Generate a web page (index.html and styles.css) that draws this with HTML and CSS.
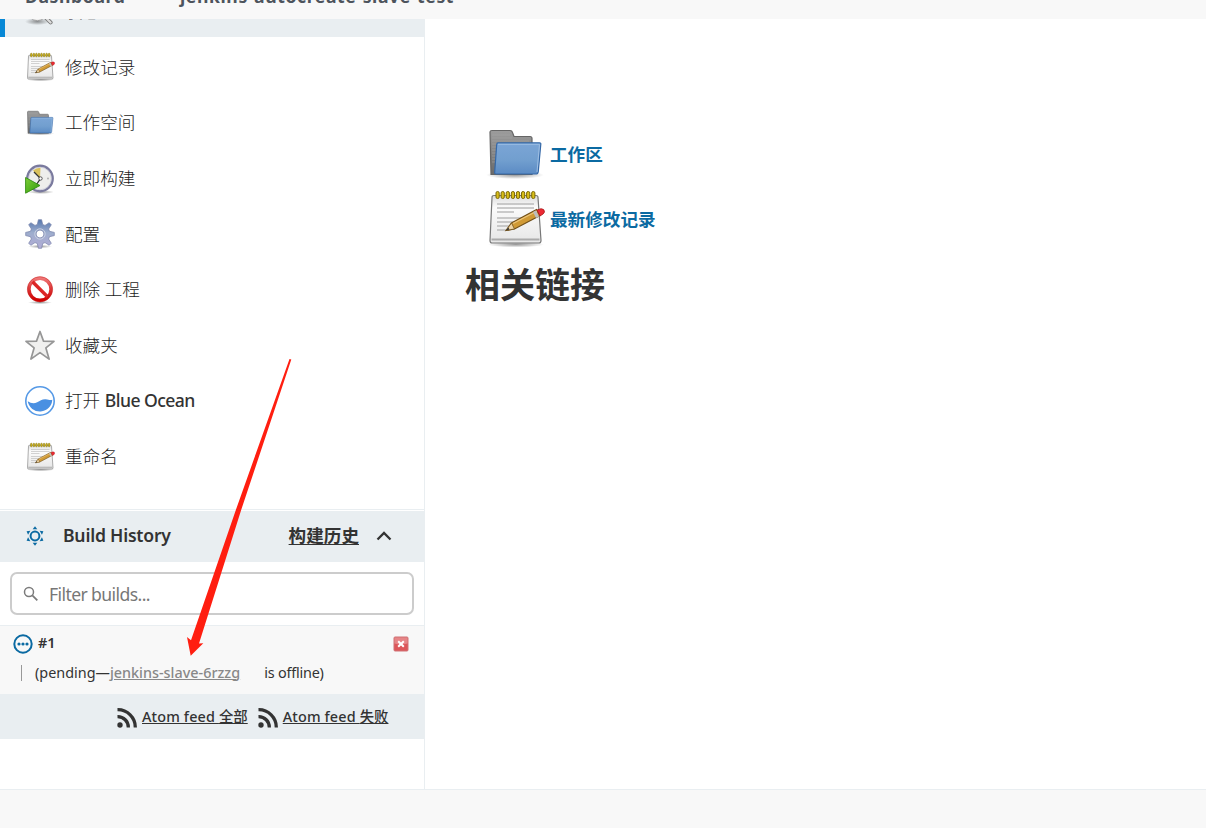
FILE: index.html
```html
<!DOCTYPE html>
<html lang="zh-CN">
<head>
<meta charset="utf-8">
<title>jenkins-autocreate-slave-test [Jenkins]</title>
<link rel="stylesheet" href="styles.css">
</head>
<body>
<svg width="0" height="0" class="defs" aria-hidden="true">
  <defs>
    <linearGradient id="gBlue" x1="0" y1="0" x2="0" y2="1"><stop offset="0" stop-color="#7ba5d6"/><stop offset=".55" stop-color="#729fcf"/><stop offset="1" stop-color="#5b8bc4"/></linearGradient>
    <linearGradient id="gGray" x1="0" y1="0" x2="0" y2="1"><stop offset="0" stop-color="#9c9c9c"/><stop offset="1" stop-color="#6a6a6a"/></linearGradient>
    <linearGradient id="gPaper" x1="0" y1="0" x2="0" y2="1"><stop offset="0" stop-color="#dcdcdc"/><stop offset=".25" stop-color="#fbfbfb"/><stop offset="1" stop-color="#e6e6e6"/></linearGradient>
    <linearGradient id="gGear" x1="0" y1="0" x2="0" y2="1"><stop offset="0" stop-color="#5577ae"/><stop offset=".45" stop-color="#9dadcd"/><stop offset="1" stop-color="#b3add6"/></linearGradient>
    <linearGradient id="gRed" x1="0" y1="0" x2="0" y2="1"><stop offset="0" stop-color="#ef7676"/><stop offset=".45" stop-color="#dd3a3a"/><stop offset="1" stop-color="#cf0000"/></linearGradient>
    <linearGradient id="gGreen" x1="0" y1="0" x2="1" y2="1"><stop offset="0" stop-color="#7fd03a"/><stop offset="1" stop-color="#2f9a08"/></linearGradient>
    <radialGradient id="gShadow"><stop offset="0" stop-color="#000" stop-opacity=".4"/><stop offset="1" stop-color="#000" stop-opacity="0"/></radialGradient>
    <symbol id="notepad" viewBox="0 0 60 60">
      <ellipse cx="31" cy="55.500" rx="28" ry="3" fill="url(#gShadow)"/>
      <path d="M9 6.500h42q2 0 2 2l3 43q0 2.500-2 2.500H7q-2 0-2-2.500l2-43q0-2 2-2z" fill="url(#gPaper)" stroke="#777" stroke-width="1.200"/>
      <path d="M6.500 50.500h48" stroke="#aaa" stroke-width="2"/>
      <path d="M12 15h37M12 19h37M12 23h17M12 29h37M12 33h27M12 37h15M12 41h12" stroke="#bbb" stroke-width="1.300"/>
      <g fill="#d8bd18" stroke="#7d6b08" stroke-width="1"><rect x="11" y="2.500" width="3.200" height="7" rx="1.500"/><rect x="16.100" y="2.500" width="3.200" height="7" rx="1.500"/><rect x="21.200" y="2.500" width="3.200" height="7" rx="1.500"/><rect x="26.300" y="2.500" width="3.200" height="7" rx="1.500"/><rect x="31.400" y="2.500" width="3.200" height="7" rx="1.500"/><rect x="36.500" y="2.500" width="3.200" height="7" rx="1.500"/><rect x="41.600" y="2.500" width="3.200" height="7" rx="1.500"/><rect x="46.700" y="2.500" width="3.200" height="7" rx="1.500"/></g>
      <path d="M21 41.500l5.500-7.500 25-13.500 3.500 6-25.500 13.500z" fill="#d09a35" stroke="#71501a" stroke-width="1.200"/>
      <path d="M28 34.500l24-12.500" stroke="#edc57a" stroke-width="1.300"/>
      <path d="M21 41.500l5.500-7.500 3 6z" fill="#eed5a7" stroke="#71501a" stroke-width=".8"/><path d="M21 41.500l2.300-3 1.200 2z" fill="#333"/>
      <path d="M51 21.500l3 6-3 1.500-3-6z" fill="#bdbdbd"/>
      <path d="M52 21l4-1.300q3.500 0 3.500 3.300-.5 2-4.500 4z" fill="#ec2934" stroke="#a81919" stroke-width=".8"/>
    </symbol>
    <symbol id="folder" viewBox="0 0 60 60">
      <ellipse cx="30" cy="51" rx="29" ry="4" fill="url(#gShadow)"/>
      <path d="M5 8q0-1.500 2-1.500h18q2 0 2.500 2l1.500 4h16q2 0 2 2v36H6z" fill="url(#gGray)" stroke="#656565" stroke-width="1.200"/>
      <path d="M7 11h18M7 14h20M7 17h37M7 20h5M7 23h5M7 26h5M7 29h5M7 32h5M7 35h5M7 38h5" stroke="#aaa" stroke-width=".5"/>
      <path d="M13 18.800h41.500q1.500 0 1.300 1.500l-2.500 27q-.4 2.700-2.500 2.700H11q-1.500 0-1.300-2l2-27.500q.1-1.700 1.300-1.700z" fill="url(#gBlue)" stroke="#3568a7" stroke-width="1.200"/>
      <path d="M13 20.300h41.500L52 48" fill="none" stroke="#9dbee3" stroke-width="1"/>
    </symbol>
  </defs>
</svg>

<header class="crumbs"><span class="crumb-home">Dashboard</span><span class="crumb-job">jenkins-autocreate-slave-test</span></header>

<div class="page">
  <aside class="side">
    <div class="task-active">
      <svg class="search-top" viewBox="0 0 34 34"><ellipse cx="14" cy="29" rx="14" ry="4" fill="url(#gShadow)"/><circle cx="14" cy="17" r="11" fill="#eee" stroke="#999"/><path d="M22 23l7 7" stroke="#777" stroke-width="4.500" stroke-linecap="round"/><path d="M22 23l7 7" stroke="#ddd" stroke-width="2.500" stroke-linecap="round"/></svg>
      <span class="active-label">状态</span>
    </div>
    <nav class="tasks">
      <a class="task"><svg class="ico"><use href="#notepad"/></svg><span>修改记录</span></a>
      <a class="task"><svg class="ico"><use href="#folder"/></svg><span>工作空间</span></a>
      <a class="task"><svg class="ico" viewBox="0 0 30 30">
        <ellipse cx="16" cy="28" rx="13" ry="2" fill="url(#gShadow)"/>
        <circle cx="15" cy="14.500" r="12.700" fill="#eeeeec" stroke="#7a7a9e" stroke-width="2.400"/>
        <circle cx="15" cy="14.500" r="11.300" fill="none" stroke="#c4c4d6" stroke-width=".7"/>
        <path d="M15 14.500L8 6.500q3.500-2.800 7.500-2.700z" fill="#d9c15c"/>
        <path d="M9 8l6.500 6.500-4 6" fill="none" stroke="#333" stroke-width="1.300"/><circle cx="15.500" cy="14.500" r="1.700" fill="#fff" stroke="#333" stroke-width=".8"/><circle cx="23" cy="14.500" r=".9" fill="#aaa"/>
        <path d="M.6 13.500L15 21.500.6 29.200z" fill="url(#gGreen)" stroke="#318b12" stroke-width=".9"/></svg><span>立即构建</span></a>
      <a class="task"><svg class="ico" viewBox="0 0 30 30">
        <ellipse cx="15" cy="27.500" rx="12" ry="1.800" fill="url(#gShadow)"/>
        <path fill-rule="evenodd" d="M13.400.7h3.200l1.100 4.800 2.300.9 4.200-2.700 2.100 2.100-2.700 4.200.9 2.300 4.800 1.100v3.200l-4.800 1.100-.9 2.300 2.700 4.200-2.100 2.100-4.200-2.700-2.300.9-1.100 4.800h-3.200l-1.100-4.800-2.300-.9-4.200 2.700-2.100-2.100L6.400 20l-.9-2.300-4.800-1.100v-3.200l4.800-1.100.9-2.300-2.700-4.200 2.100-2.100L10 6.400l2.300-.9zM15 11.100a3.900 3.900 0 1 0 .01 0z" fill="url(#gGear)" stroke="#7580a8" stroke-width=".7" stroke-linejoin="round"/>
        <circle cx="15" cy="15" r="5.200" fill="none" stroke="#c9d0e2" stroke-width="1"/></svg><span>配置</span></a>
      <a class="task"><svg class="ico" viewBox="0 0 30 30">
        <ellipse cx="15" cy="27.500" rx="12" ry="1.600" fill="url(#gShadow)"/>
        <circle cx="15" cy="14.300" r="11" fill="#fff" stroke="url(#gRed)" stroke-width="3.400"/>
        <path d="M7.500 6.800l15 15" stroke="#dc2626" stroke-width="3.400"/><circle cx="15" cy="14.300" r="12.600" fill="none" stroke="#c52222" stroke-width=".5"/></svg><span>删除 工程</span></a>
      <a class="task"><svg class="ico" viewBox="0 0 30 30">
        <path d="M15 1.500l3.500 9.600 10.500.2-8.100 6.600 3.200 11.200-9.100-6.500-9.100 6.500 3.200-11.200L1 11.300l10.500-.2z" fill="#f0f0ef" stroke="#969696" stroke-width="1.700" stroke-linejoin="round"/></svg><span>收藏夹</span></a>
      <a class="task"><svg class="ico" viewBox="0 0 30 30">
        <circle cx="15" cy="15" r="14.200" fill="#fff" stroke="#5599e6" stroke-width="1.600"/>
        <path d="M2.700 15.300c3 1.800 6 2.700 9.500 1 3-1.600 5-3.400 8.500-3.100 3 .3 4.300 1.200 6.600.5A12.400 12.400 0 0 1 2.700 15.300z" fill="#4a90e2"/></svg><span>打开 <b class="en">Blue Ocean</b></span></a>
      <a class="task"><svg class="ico"><use href="#notepad"/></svg><span>重命名</span></a>
    </nav>

    <section class="history">
      <div class="hist-head">
        <svg class="sun" viewBox="0 0 20 20"><circle cx="10" cy="10" r="4.400" fill="none" stroke="#0b6aa2" stroke-width="2"/><g fill="#0b6aa2"><path id="ray" d="M10 .3l2.300 3H7.700z"/><use href="#ray" transform="rotate(60 10 10)"/><use href="#ray" transform="rotate(120 10 10)"/><use href="#ray" transform="rotate(180 10 10)"/><use href="#ray" transform="rotate(240 10 10)"/><use href="#ray" transform="rotate(300 10 10)"/></g></svg>
        <span class="hist-title">Build History</span>
        <a class="trend">构建历史</a>
        <svg class="chev" viewBox="0 0 16 12"><path d="M1.500 9.500L8 3l6.500 6.500" fill="none" stroke="#333" stroke-width="2.300"/></svg>
      </div>
      <div class="filter">
        <svg class="mag" viewBox="0 0 16 16"><circle cx="6" cy="6" r="4.500" fill="none" stroke="#7b7b7b" stroke-width="1.500"/><path d="M9.300 9.300l5 5" stroke="#7b7b7b" stroke-width="1.800"/></svg>
        <span class="ph">Filter builds...</span>
      </div>
      <div class="build">
        <div class="build-top">
          <svg class="dots" viewBox="0 0 20 20"><circle cx="10" cy="10" r="8.700" fill="none" stroke="#0b6aa2" stroke-width="2"/><g fill="#0b6aa2"><circle cx="6" cy="10" r="1.600"/><circle cx="10" cy="10" r="1.600"/><circle cx="14" cy="10" r="1.600"/></g></svg>
          <span class="num">#1</span>
          <svg class="stop" viewBox="0 0 16 16"><rect x="1" y="1" width="14" height="14" rx="1" fill="#dd5659" stroke="#cf7376"/><path d="M1.500 1.500h13v6q-7 2-13 0z" fill="#fff" opacity=".28"/><path d="M5.200 5.200l5.600 5.600M10.800 5.200l-5.600 5.600" stroke="#fff" stroke-width="2"/></svg>
        </div>
        <div class="pending"><span class="pend">(pending—</span><a class="node">jenkins-slave-6rzzg</a><span class="offline">is offline)</span></div>
      </div>
      <div class="feeds">
        <svg class="rss" viewBox="0 0 20 20"><circle cx="3" cy="17" r="2.700" fill="#333"/><path d="M.5 8.700A10.500 10.500 0 0 1 11.300 19.500M.5 1.700A17.500 17.500 0 0 1 18.300 19.500" fill="none" stroke="#333" stroke-width="3.300"/></svg>
        <a class="feed"><span class="feed-en">Atom feed </span>全部</a>
        <svg class="rss second" viewBox="0 0 20 20"><circle cx="3" cy="17" r="2.700" fill="#333"/><path d="M.5 8.700A10.500 10.500 0 0 1 11.300 19.500M.5 1.700A17.500 17.500 0 0 1 18.300 19.500" fill="none" stroke="#333" stroke-width="3.300"/></svg>
        <a class="feed"><span class="feed-en">Atom feed </span>失败</a>
      </div>
    </section>
  </aside>

  <main class="main">
    <a class="link"><svg class="big"><use href="#folder"/></svg><span>工作区</span></a>
    <a class="link"><svg class="big"><use href="#notepad"/></svg><span>最新修改记录</span></a>
    <h2 class="related">相关链接</h2>
  </main>
</div>
<footer class="foot"></footer>

<svg class="arrow" viewBox="0 0 110 305"><path d="M104.500 4L106.300 4.500 56 155.500 14 288.500 18.300 288.300 5.700 300.700 2 282 6 285.300 51 154.500z" fill="#ff1e10"/></svg>
</body>
</html>
```
FILE: styles.css
```css
* { box-sizing: border-box; }
body {
  margin: 0;
  height: 828px;
  overflow: hidden;
  display: flex;
  flex-direction: column;
  background: #fff;
  color: #333;
  font-family: "Noto Sans", "Noto Sans CJK SC", sans-serif;
}
.defs { position: absolute; }
.crumbs {
  height: 19px;
  flex: none;
  overflow: hidden;
  display: flex;
  align-items: flex-end;
  padding: 0 25px 11px;
  background: #f8f8f8;
  color: #4d545d;
  font-size: 17.6px;
  line-height: 24px;
  font-weight: 700;
  letter-spacing: .6px;
}
.crumb-home { width: 155px; }
.page { height: 770px; flex: none; display: flex; }
.side { width: 425px; border-right: 1px solid #e9eef1; }
.task-active {
  height: 18px;
  overflow: hidden;
  display: flex;
  align-items: flex-end;
  background: #e9eef1;
  border-left: 5px solid #0788d6;
  padding: 0 0 12px 20px;
}
.search-top { width: 30px; height: 30px; flex: none; margin-bottom: -1px; }
.active-label { font-size: 17.6px; line-height: 24px; margin: 0 0 2px 10px; }
.tasks { padding-top: 2.6px; height: 472px; }
.task {
  height: 55.6px;
  display: flex;
  align-items: center;
  gap: 10px;
  padding-left: 25px;
  font-size: 17.6px;
  font-weight: 300;
  color: #1c1c1c;
}
.task > span { margin-top: -2px; }
.ico { width: 30px; height: 30px; flex: none; }
.en { font-weight: 500; letter-spacing: -.55px; color: #333; }
.history { border-top: 1px solid #e9eef1; padding-top: 1px; }
.hist-head {
  height: 51px;
  display: flex;
  align-items: center;
  padding: 0 32px 4px 25px;
  background: #e9eef1;
  font-size: 17.6px;
  font-weight: 600;
}
.sun { width: 20px; height: 20px; margin-top: 2px; }
.hist-title { margin-left: 18px; letter-spacing: -.22px; }
.trend { margin-left: auto; text-decoration: underline; text-underline-offset: 2px; }
.chev { width: 16px; height: 12px; margin: 2px 0 0 17px; }
.filter {
  height: 43px;
  margin: 10px;
  border: 2px solid #ccc;
  border-radius: 7px;
  display: flex;
  align-items: center;
  padding-left: 11px;
  gap: 10px;
  font-size: 17.6px;
  color: #777;
}
.ph { letter-spacing: -.6px; }
.mag { width: 16px; height: 16px; }
.build { height: 69px; border-top: 1px solid #e9eef1; background: #f8f8f8; font-size: 14.4px; }
.build-top { display: flex; align-items: center; height: 33px; padding: 0 15px 0 13px; }
.dots { width: 20px; height: 20px; margin-top: 2px; }
.num { font-weight: 600; margin-left: 5px; }
.stop { width: 16px; height: 16px; margin: 2px 0 0 auto; }
.pending {
  display: flex;
  align-items: center;
  height: 16px;
  margin: 6px 0 0 21px;
  padding-left: 13px;
  border-left: 1px solid #999;
}
.pending > * { margin-top: -2px; }
.node { color: #888; font-weight: 500; text-decoration: underline; }
.offline { margin-left: 24px; letter-spacing: -.2px; }
.feeds {
  height: 45px;
  display: flex;
  align-items: center;
  padding: 0 0 2px 117px;
  background: #e9eef1;
  font-size: 14.4px;
  font-weight: 500;
}
.rss { width: 20px; height: 20px; margin: 4px 5px 0 0; }
.second { margin-left: 10px; }
.feed { white-space: pre; text-decoration: underline; }
.feed-en { letter-spacing: .15px; }
.main { padding: 103px 0 0 40px; }
.link {
  display: flex;
  align-items: center;
  height: 64.500px;
  padding-left: 20px;
  gap: 5px;
  color: #0b6aa2;
  font-size: 17.6px;
  font-weight: 700;
}
.link > span { margin-top: -1px; }
.big { width: 60px; height: 60px; }
.related { margin: 8px 0 0; font-size: 35px; line-height: 52px; font-weight: 700; }
.foot { height: 39px; flex: none; border-top: 1px solid #e9eef1; background: #f8f8f8; }
.arrow { position: absolute; left: 185px; top: 355px; width: 110px; height: 305px; }
```
